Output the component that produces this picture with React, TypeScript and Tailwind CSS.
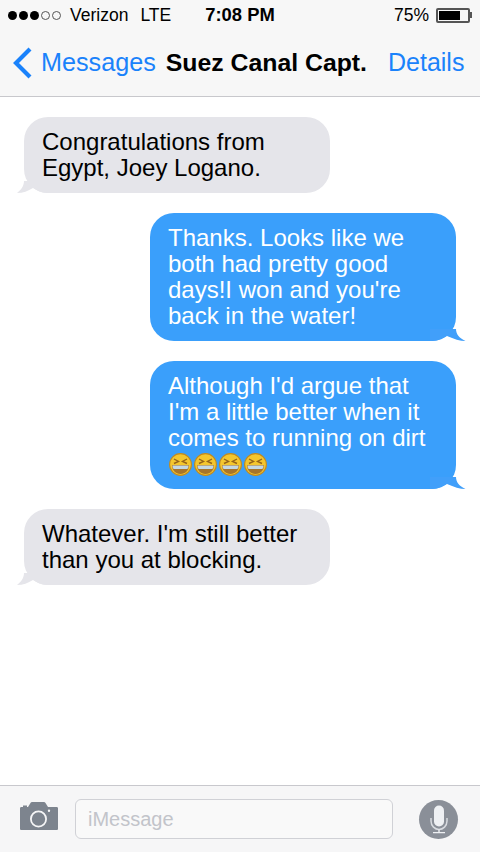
import { ReactNode } from "react";

function LaughEmoji() {
  return (
    <svg width="23" height="23" viewBox="0 0 23 23" className="shrink-0">
      <circle cx="11.5" cy="11.5" r="10.9" fill="#f4c62e" stroke="#c08a20" strokeWidth="1.1" />
      <path d="M5 6 L9.5 8.5 L5 10.5" fill="none" stroke="#96641a" strokeWidth="1.4" />
      <path d="M18 6 L13.5 8.5 L18 10.5" fill="none" stroke="#96641a" strokeWidth="1.4" />
      <path d="M3 12 H20 C20 17.5 16.5 21 11.5 21 C6.5 21 3 17.5 3 12 Z" fill="#a8752a" />
      <path d="M3.4 12.4 H19.6 C19.5 13.8 19.1 15 18.4 16 H4.6 C3.9 15 3.5 13.8 3.4 12.4 Z" fill="#c4d8e4" />
    </svg>
  );
}

function Bubble({ side, children }: { side: "in" | "out"; children: ReactNode }) {
  const isOut = side === "out";
  return (
    <div className={isOut ? "relative ml-[150px] w-[306px]" : "relative ml-[24px] w-[306px]"}>
      <div
        className={
          isOut
            ? "rounded-[24px] bg-[#3a9ffb] px-[18px] py-[12px] text-[24px] leading-[26px] text-white"
            : "rounded-[24px] bg-[#e5e5ea] px-[18px] py-[12px] text-[24px] leading-[26px] text-black"
        }
      >
        {children}
      </div>
      {isOut ? (
        <svg width="36" height="12" viewBox="0 0 36 12" className="absolute right-[-10px] bottom-0">
          <path d="M0 0 H26 C26 5 29 9 35.5 12 C30 12 24 10 17 7 C12 9 8 12 2 12 H0 Z" fill="#419ffa" />
        </svg>
      ) : (
        <svg width="34" height="12" viewBox="0 0 34 12" className="absolute left-[-7px] bottom-0">
          <path d="M7 0 H32 V12 H30 C24 12 20 9 16 7 C11 10 6 12 0 12 C4 9 7 5 7 0 Z" fill="#e5e5ea" />
        </svg>
      )}
    </div>
  );
}

export default function App() {
  return (
    <div className="flex h-[852px] w-[480px] flex-col overflow-hidden bg-white font-['Liberation_Sans',Arial,sans-serif]">
      <header className="h-[97px] shrink-0 border-b border-[#c8c8cc] bg-[#f7f7f7]">
        <div className="flex h-[30px] items-center justify-between px-[8px] text-[17.5px] text-black">
          <div className="flex w-[180px] items-center">
            <span className="flex items-center gap-[2px]">
              <span className="h-[9px] w-[9px] rounded-full bg-black" />
              <span className="h-[9px] w-[9px] rounded-full bg-black" />
              <span className="h-[9px] w-[9px] rounded-full bg-black" />
              <span className="h-[9px] w-[9px] rounded-full border border-[#555]" />
              <span className="h-[9px] w-[9px] rounded-full border border-[#555]" />
            </span>
            <span className="ml-[9px]">Verizon</span>
            <span className="ml-[12px]">LTE</span>
          </div>
          <span className="text-[18.4px] font-bold">7:08 PM</span>
          <div className="flex w-[180px] items-center justify-end">
            <span>75%</span>
            <span className="ml-[7px] flex h-[15px] w-[34px] items-center rounded-[2px] border-2 border-[#555] p-[1px]">
              <span className="h-full w-[21px] bg-black" />
            </span>
            <span className="h-[6px] w-[2px] bg-[#555]" />
          </div>
        </div>
        <div className="flex h-[66px] items-center text-[25.2px]">
          <svg width="22" height="34" viewBox="0 0 22 34" className="ml-[11px] shrink-0">
            <path d="M19 3 L5 17 L19 31" fill="none" stroke="#1a82fb" strokeWidth="4.2" />
          </svg>
          <span className="ml-[8px] text-[#1a82fb]">Messages</span>
          <span className="ml-[10px] text-[24.8px] font-bold text-black">Suez Canal Capt.</span>
          <span className="ml-[21px] text-[25px] text-[#1a82fb]">Details</span>
        </div>
      </header>

      <main className="flex flex-1 flex-col gap-[20px] pt-[20px]">
        <Bubble side="in">
          Congratulations from
          <br />
          Egypt, Joey Logano.
        </Bubble>
        <Bubble side="out">
          Thanks. Looks like we
          <br />
          both had pretty good
          <br />
          days!I won and you're
          <br />
          back in the water!
        </Bubble>
        <Bubble side="out">
          Although I'd argue that
          <br />
          I'm a little better when it
          <br />
          comes to running on dirt
          <div className="ml-[1px] flex h-[26px] items-center gap-[2px]">
            <LaughEmoji />
            <LaughEmoji />
            <LaughEmoji />
            <LaughEmoji />
          </div>
        </Bubble>
        <Bubble side="in">
          Whatever. I'm still better
          <br />
          than you at blocking.
        </Bubble>
      </main>

      <footer className="flex h-[67px] shrink-0 items-center border-t border-[#c8c8cd] bg-[#f6f6f7]">
        <svg width="38" height="30" viewBox="0 0 38 30" className="mb-[6px] ml-[20px] shrink-0">
          <path
            fillRule="evenodd"
            d="M1.5 6 H3 V4.5 H7 V6 H8 L10.5 2 C11 1.3 11.5 1 12.5 1 H23.5 C24.5 1 25 1.3 25.5 2 L28 6 H36.5 C37.5 6 38 6.5 38 7.5 V27.5 C38 28.5 37.5 29 36.5 29 H1.5 C0.5 29 0 28.5 0 27.5 V7.5 C0 6.5 0.5 6 1.5 6 Z M18.5 9.5 A8.5 8.5 0 1 0 18.5 26.5 A8.5 8.5 0 1 0 18.5 9.5 Z M18.5 11.3 A6.7 6.7 0 1 1 18.5 24.7 A6.7 6.7 0 1 1 18.5 11.3 Z M29 8.5 A1.2 1.2 0 1 0 29 10.9 A1.2 1.2 0 1 0 29 8.5 Z"
            fill="#7d848e"
          />
        </svg>
        <div className="ml-[17px] flex h-[40px] w-[318px] items-center rounded-[6px] border border-[#d0d1d6] bg-[#f9f9f9] pl-[12px] text-[20px] text-[#c2c4ca]">
          iMessage
        </div>
        <div className="ml-[26px] flex h-[39px] w-[39px] shrink-0 items-center justify-center rounded-full bg-[#8a8f98]">
          <svg width="20" height="30" viewBox="0 0 20 30">
            <rect x="5" y="1.5" width="10" height="21" rx="5" fill="#eef0f3" />
            <path d="M2 14 V17 C2 22 6 25.5 10 25.5 C14 25.5 18 22 18 17 V14" fill="none" stroke="#d8dbe0" strokeWidth="1.5" />
            <path d="M10 25.5 V28 M4 28.6 H16" stroke="#eef0f3" strokeWidth="1.4" fill="none" />
          </svg>
        </div>
      </footer>
    </div>
  );
}
